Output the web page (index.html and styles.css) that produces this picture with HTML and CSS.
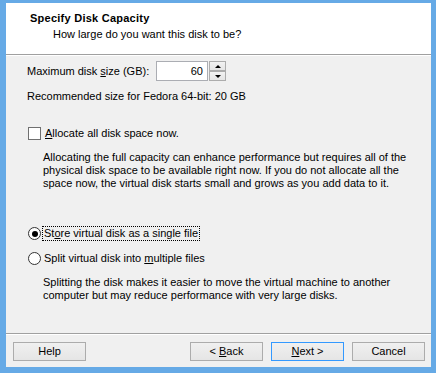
FILE: index.html
```html
<!DOCTYPE html>
<html>
<head>
<meta charset="utf-8">
<link rel="stylesheet" href="styles.css">
</head>
<body>
<div class="window">
  <div class="header">
    <div class="title">Specify Disk Capacity</div>
    <div class="subtitle">How large do you want this disk to be?</div>
  </div>
  <div class="main">
    <div class="size-row">
      <span class="label">Maximum disk <u>s</u>ize (GB):</span>
      <div class="spin">
        <div class="spin-input">60</div>
        <div class="spin-btns">
          <div class="spin-btn"><span class="tri-up"></span></div>
          <div class="spin-btn"><span class="tri-down"></span></div>
        </div>
      </div>
    </div>
    <div class="recommend">Recommended size for Fedora 64-bit: 20 GB</div>
    <div class="check-row">
      <span class="checkbox"></span>
      <span class="opt-label"><u>A</u>llocate all disk space now.</span>
    </div>
    <p class="desc desc1">Allocating the full capacity can enhance performance but requires all of the physical disk space to be available right now. If you do not allocate all the space now, the virtual disk starts small and grows as you add data to it.</p>
    <div class="radio-row radio1">
      <span class="radio checked"></span>
      <span class="opt-label focus">St<u>o</u>re virtual disk as a single file</span>
    </div>
    <div class="radio-row radio2">
      <span class="radio"></span>
      <span class="opt-label">Split virtual disk into <u>m</u>ultiple files</span>
    </div>
    <p class="desc desc2">Splitting the disk makes it easier to move the virtual machine to another computer but may reduce performance with very large disks.</p>
  </div>
  <div class="footer">
    <button class="btn">Help</button>
    <div class="spacer"></div>
    <button class="btn">&lt; <u>B</u>ack</button>
    <button class="btn default"><u>N</u>ext &gt;</button>
    <button class="btn">Cancel</button>
  </div>
</div>
</body>
</html>
```

FILE: styles.css
```css
html, body {
  margin: 0;
  padding: 0;
}
body {
  width: 436px;
  height: 373px;
  background: #66aae6;
  font-family: Tahoma, "Liberation Sans", Arial, sans-serif;
  font-size: 11px;
  line-height: 13px;
  color: #000;
  overflow: hidden;
}
.window {
  margin: 3px 5px 0 6px;
  width: 425px;
  height: 364px;
  background: #f0f0f0;
  display: flex;
  flex-direction: column;
}
.header {
  background: #fff;
  padding: 9px 0 13px 24px;
  border-bottom: 1px solid #a0a0a0;
  box-shadow: 0 1px 0 #fff;
  height: 29px;
}
.title {
  font-weight: bold;
  letter-spacing: 0.25px;
}
.subtitle {
  margin-top: 3px;
  padding-left: 23px;
  color: #000;
}
.main {
  flex: 1;
  padding-left: 21px;
}
.size-row {
  margin-top: 6px;
  display: flex;
  align-items: center;
  height: 20px;
}
.label {
  width: 129px;
}
.spin {
  display: flex;
  height: 20px;
}
.spin-input {
  width: 46px;
  height: 18px;
  line-height: 18px;
  border: 1px solid #abadb3;
  background: #fff;
  text-align: right;
  padding-right: 4px;
  box-sizing: content-box;
}
.spin-btns {
  margin-left: 1px;
  display: flex;
  flex-direction: column;
}
.spin-btn {
  width: 15px;
  height: 8px;
  border: 1px solid #acacac;
  background: linear-gradient(#f2f2f2, #e5e5e5);
  display: flex;
  align-items: center;
  justify-content: center;
}
.tri-up {
  width: 0;
  height: 0;
  border-left: 3px solid transparent;
  border-right: 3px solid transparent;
  border-bottom: 3px solid #000;
}
.tri-down {
  width: 0;
  height: 0;
  border-left: 3px solid transparent;
  border-right: 3px solid transparent;
  border-top: 3px solid #000;
}
.recommend {
  margin-top: 9px;
}
.check-row, .radio-row {
  display: flex;
  align-items: center;
  height: 13px;
}
.check-row {
  margin-top: 24px;
}
.checkbox {
  width: 11px;
  height: 11px;
  border: 1px solid #707070;
  background: #fff;
  margin-left: 1px;
  margin-right: 3px;
}
.opt-label {
  padding: 0 1px;
}
.focus {
  outline: 1px dotted #000;
  outline-offset: 0;
}
.desc {
  margin: 0;
  padding-left: 16px;
  width: 370px;
}
.desc1 {
  margin-top: 11px;
}
.radio1 {
  margin-top: 37px;
}
.radio2 {
  margin-top: 12px;
}
.desc2 {
  margin-top: 11px;
}
.radio {
  width: 11px;
  height: 11px;
  border: 1px solid #333;
  border-radius: 50%;
  background: #fff;
  margin-left: 1px;
  margin-right: 2px;
  display: flex;
  align-items: center;
  justify-content: center;
}
.radio.checked::after {
  content: "";
  width: 6px;
  height: 6px;
  border-radius: 50%;
  background: #000;
}
.footer {
  border-top: 1px solid #a0a0a0;
  box-shadow: inset 0 1px 0 #fff;
  height: 34px;
  box-sizing: border-box;
  padding: 8px 6px 0 7px;
  display: flex;
  align-items: flex-start;
  gap: 8px;
}
.spacer {
  flex: 1;
}
.btn {
  width: 73px;
  height: 19px;
  border: 1px solid #acacac;
  background: linear-gradient(#f0f0f0, #e5e5e5);
  font-family: Tahoma, "Liberation Sans", Arial, sans-serif;
  font-size: 11px;
  line-height: 13px;
  color: #000;
  padding: 0;
  margin: 0;
}
.btn.default {
  border-color: #3399ff;
}
```
